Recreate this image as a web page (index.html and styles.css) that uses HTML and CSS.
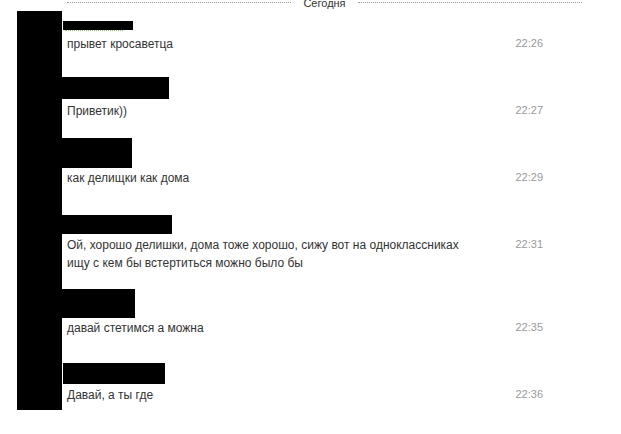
FILE: index.html
```html
<!DOCTYPE html>
<html lang="ru">
<head>
<meta charset="utf-8">
<title>Сообщения</title>
<link rel="stylesheet" href="styles.css">
</head>
<body>
<div class="day">
  <span class="day-line"></span>
  <span class="day-label">Сегодня</span>
  <span class="day-line"></span>
</div>
<div class="chat">
  <div class="avatar-redact"></div>
  <div class="messages">
    <div class="msg">
      <div class="name"><span class="name-text"></span></div>
      <div class="row"><div class="text">прывет кросаветца</div><div class="time">22:26</div></div>
      <span class="redact"></span>
    </div>
    <div class="msg">
      <div class="name"></div>
      <div class="row"><div class="text">Приветик))</div><div class="time">22:27</div></div>
      <span class="redact"></span>
    </div>
    <div class="msg">
      <div class="name"></div>
      <div class="row"><div class="text">как делищки как дома</div><div class="time">22:29</div></div>
      <span class="redact"></span>
    </div>
    <div class="msg msg-long">
      <div class="name"></div>
      <div class="row"><div class="text">Ой, хорошо делишки, дома тоже хорошо, сижу вот на одноклассниках ищу с кем бы встертиться можно было бы</div><div class="time">22:31</div></div>
      <span class="redact"></span>
    </div>
    <div class="msg">
      <div class="name"></div>
      <div class="row"><div class="text">давай стетимся а можна</div><div class="time">22:35</div></div>
      <span class="redact"></span>
    </div>
    <div class="msg">
      <div class="name"></div>
      <div class="row"><div class="text">Давай, а ты где</div><div class="time">22:36</div></div>
      <span class="redact"></span>
    </div>
  </div>
</div>
</body>
</html>
```
FILE: styles.css
```css
html, body {
  margin: 0;
  padding: 0;
  background: #fff;
}
body {
  width: 621px;
  height: 434px;
  overflow: hidden;
  font-family: "Liberation Sans", Arial, sans-serif;
  color: #333;
}
.day {
  display: flex;
  align-items: center;
  gap: 12px;
  height: 11px;
  margin: -2px 39px 0 67px;
}
.day-line {
  flex: 1;
  border-top: 1px dotted #999;
  margin-top: -2px;
}
.day-label {
  font-size: 11px;
  line-height: 11px;
  color: #333;
}
.chat {
  display: flex;
  padding-left: 17px;
  margin-top: 2px;
}
.avatar-redact {
  width: 45px;
  height: 399px;
  background: #000;
  flex: none;
}
.messages {
  flex: 1;
  padding-right: 78px;
}
.msg {
  position: relative;
  padding: 6px 0 25px;
}
.msg-long {
  padding-bottom: 23px;
}
.name {
  height: 18px;
  position: relative;
}
.name-text {
  position: absolute;
  left: 3px;
  top: 13px;
  width: 58px;
  border-top: 1px dotted #8cc26a;
}
.row {
  display: flex;
  align-items: flex-start;
}
.text {
  font-size: 12px;
  line-height: 18px;
  padding-left: 5px;
  width: 402px;
  color: #333;
}
.time {
  margin-left: auto;
  font-size: 11px;
  line-height: 16px;
  color: #999;
}
.redact {
  position: absolute;
  background: #000;
  left: 0;
}
.msg:nth-child(1) .redact { top: 10px; height: 9px; left: 1px; width: 70px; }
.msg:nth-child(2) .redact { top: -1px; height: 22px; width: 107px; }
.msg:nth-child(3) .redact { top: -7px; height: 30px; width: 70px; }
.msg:nth-child(4) .redact { top: 3px; height: 19px; width: 110px; }
.msg:nth-child(5) .redact { top: -6px; height: 29px; width: 73px; }
.msg:nth-child(6) .redact { top: 1px; height: 21px; left: 1px; width: 102px; }
```
